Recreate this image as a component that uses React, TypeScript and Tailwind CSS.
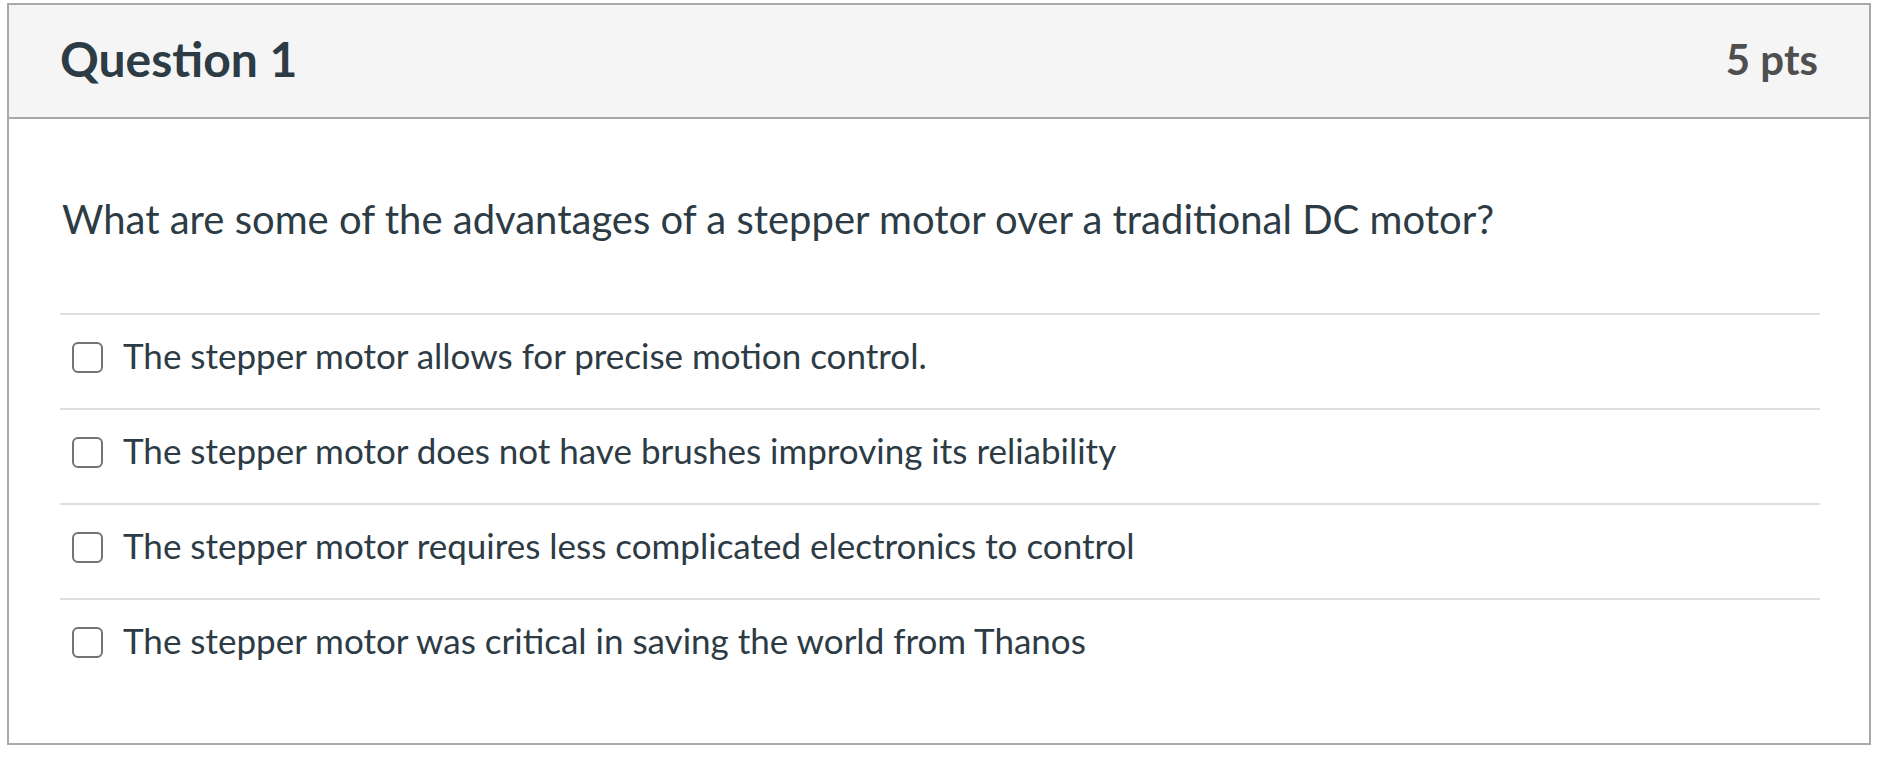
import React from 'react';

const answers = [
    'The stepper motor allows for precise motion control.',
    'The stepper motor does not have brushes improving its reliability',
    'The stepper motor requires less complicated electronics to control',
    'The stepper motor was critical in saving the world from Thanos',
];

export default function App() {
    return (
        <div className="w-[1880px] h-[765px] bg-white pt-[3px] pl-[7px] font-['Lato',_'Noto_Sans',sans-serif] text-[#2d3b45]">
            <div className="w-[1864px] h-[742px] border-2 border-[#a9a9a9] flex flex-col">
                <div className="h-[114px] bg-[#f5f5f5] border-b-2 border-[#a9a9a9] flex items-center justify-between pl-[51px] pr-[51px]">
                    <h2 className="text-[48px] font-bold leading-none pb-[4px]">Question 1</h2>
                    <span className="text-[42px] font-bold leading-none text-[#4f4f4f] pb-[4px]">5 pts</span>
                </div>
                <div className="pl-[51px] pr-[49px]">
                    <p className="mt-[76px] text-[40px] leading-[48px] pl-[2px]">
                        What are some of the advantages of a stepper motor over a traditional DC motor?
                    </p>
                    <div className="mt-[70px]">
                        {answers.map((a) => (
                            <label
                                key={a}
                                className="flex items-start h-[95px] border-t-2 border-[#dedede] pt-[19px] pl-[12px]"
                            >
                                <span className="mt-[8px] w-[31px] h-[31px] shrink-0 rounded-[6px] border-2 border-[#737373] bg-white" />
                                <span className="ml-[20px] text-[35px] leading-[43px]">{a}</span>
                            </label>
                        ))}
                    </div>
                </div>
            </div>
        </div>
    );
}
